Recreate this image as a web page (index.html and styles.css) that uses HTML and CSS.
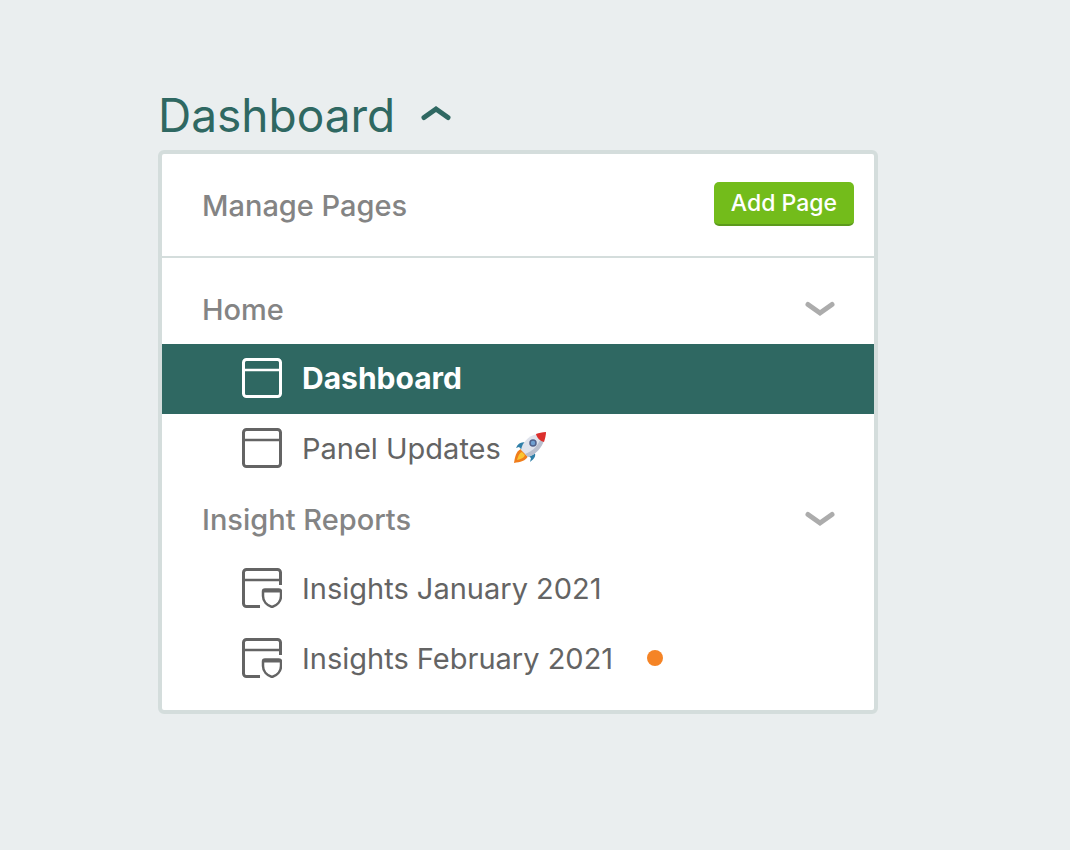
FILE: index.html
```
<!DOCTYPE html>
<html lang="en">
<head>
  <meta charset="UTF-8" />
  <meta name="viewport" content="width=device-width, initial-scale=1" />
  <title>Dashboard</title>
  <link rel="stylesheet" href="styles.css">
</head>
<body>

<main class="page">
  <h1 class="title">
    <button type="button" class="title-toggle" aria-expanded="true" aria-controls="pages-menu">
      Dashboard
      <svg class="chevron" viewBox="0 0 30 18" aria-hidden="true"><path d="M3 11.5 L15 3 L27 11.5" /></svg>
    </button>
  </h1>

  <nav class="menu" id="pages-menu" aria-label="Pages">
    <div class="menu-header">
      <h2 class="menu-title">Manage Pages</h2>
      <button type="button" class="add-button">Add Page</button>
    </div>

    <div class="menu-body">
      <button type="button" class="group" aria-expanded="true">
        Home
        <svg class="chevron" viewBox="0 0 30 18" aria-hidden="true"><path d="M3 4.5 L15 13 L27 4.5" /></svg>
      </button>
      <ul class="page-list">
        <li>
          <a href="#" class="page-link active" aria-current="page">
            <svg class="page-icon" viewBox="0 0 40 40" aria-hidden="true">
              <rect x="1.5" y="1.5" width="37" height="37" rx="3" />
              <path class="thin" d="M2 12 H38" />
            </svg>
            Dashboard
          </a>
        </li>
        <li>
          <a href="#" class="page-link">
            <svg class="page-icon" viewBox="0 0 40 40" aria-hidden="true">
              <rect x="1.5" y="1.5" width="37" height="37" rx="3" />
              <path class="thin" d="M2 12 H38" />
            </svg>
            Panel Updates
            <svg class="rocket" viewBox="0 0 34 34" aria-hidden="true">
              <path fill="#2f7fa8" d="M14 12 C9 10 5 12 3 17 L6 16 L9 19 Z M21 20 C24 25 21 28 17 31 L18 27 L14 24 Z" />
              <path fill="#f07d1a" d="M8 18 C3 20 2 26 1 32 C7 31 13 30 15 25 Z" />
              <path fill="#fbc531" d="M9 21 C6 22 5 26 4 29 C8 28 11 27 12 24 Z" />
              <path fill="#dfe3ec" d="M24 3 C15 5 9 12 8 19 L15 26 C22 24 29 17 31 9 Z" />
              <path fill="#b9bfce" d="M31 9 C29 17 22 24 15 26 L12 23 C20 20 26 14 28 6 Z" />
              <path fill="#dc2f2c" d="M33 1 C29 1 26 2 23 3 C24 7 27 10 31 11 C32 8 33 4 33 1 Z" />
              <circle cx="20" cy="12" r="3" fill="#6f9fd0" stroke="#50628c" stroke-width="1.5" />
            </svg>
          </a>
        </li>
      </ul>

      <button type="button" class="group" aria-expanded="true">
        Insight Reports
        <svg class="chevron" viewBox="0 0 30 18" aria-hidden="true"><path d="M3 4.5 L15 13 L27 4.5" /></svg>
      </button>
      <ul class="page-list">
        <li>
          <a href="#" class="page-link">
            <svg class="page-icon" viewBox="0 0 40 40" aria-hidden="true">
              <path d="M18 38.5 H4.5 A3 3 0 0 1 1.5 35.5 V4.5 A3 3 0 0 1 4.5 1.5 H35.5 A3 3 0 0 1 38.5 4.5 V17" />
              <path class="thin" d="M2 12 H38" />
              <path class="shield" d="M23 21.5 H37 Q39 21.5 39 23.5 V28 C39 33.5 35 37.5 30 39 C25 37.5 21 33.5 21 28 V23.5 Q21 21.5 23 21.5 Z" />
              <path d="M21 23 H39" />
            </svg>
            Insights January 2021
          </a>
        </li>
        <li>
          <a href="#" class="page-link">
            <svg class="page-icon" viewBox="0 0 40 40" aria-hidden="true">
              <path d="M18 38.5 H4.5 A3 3 0 0 1 1.5 35.5 V4.5 A3 3 0 0 1 4.5 1.5 H35.5 A3 3 0 0 1 38.5 4.5 V17" />
              <path class="thin" d="M2 12 H38" />
              <path class="shield" d="M23 21.5 H37 Q39 21.5 39 23.5 V28 C39 33.5 35 37.5 30 39 C25 37.5 21 33.5 21 28 V23.5 Q21 21.5 23 21.5 Z" />
              <path d="M21 23 H39" />
            </svg>
            Insights February 2021
            <span class="dot"></span>
          </a>
        </li>
      </ul>
    </div>
  </nav>
</main>

</body>
</html>
```
FILE: styles.css
```
* {
  box-sizing: border-box;
}
body {
  margin: 0;
  background: #eaeeef;
  color: #646464;
  font-family: Inter, "Liberation Sans", sans-serif;
  font-size: 29px;
}
button {
  border: 0;
  padding: 0;
  background: none;
  color: inherit;
  font: inherit;
  cursor: pointer;
}
.page {
  max-width: 878px;
  padding: 80px 0 80px 158px;
}
.title {
  margin: 0;
  color: #2f6862;
  font-size: 46px;
  font-weight: 400;
  line-height: 70px;
}
.title-toggle {
  display: flex;
  align-items: center;
  gap: 26px;
}
.chevron {
  width: 30px;
  height: 18px;
  fill: none;
  stroke: currentColor;
  stroke-width: 5;
  stroke-linecap: round;
  overflow: visible;
}
.menu {
  background: white;
  border: 4px solid #d4dddc;
  border-radius: 6px;
}
.menu-header {
  display: flex;
  align-items: flex-start;
  justify-content: space-between;
  padding: 28px 20px 26px 40px;
  border-bottom: 2px solid #d4dddc;
}
.menu-title {
  margin: 0;
  color: #848484;
  font-size: 29px;
  font-weight: 500;
  line-height: 48px;
}
.add-button {
  padding: 0 17px;
  background: #73bc1b;
  border-bottom: 2px solid #5c9a1c;
  border-radius: 5px;
  color: white;
  font-size: 23px;
  font-weight: 500;
  line-height: 42px;
}
.menu-body {
  padding: 16px 0;
}
.group {
  display: flex;
  align-items: center;
  justify-content: space-between;
  width: 100%;
  height: 70px;
  padding: 0 39px 0 40px;
  color: #848484;
  font-weight: 500;
}
.group .chevron {
  color: #acacac;
}
.page-list {
  margin: 0;
  padding: 0;
  list-style: none;
}
.page-link {
  display: flex;
  align-items: center;
  height: 70px;
  padding: 0 80px 2px;
  color: #646464;
  text-decoration: none;
}
.page-link.active {
  background: #2f6862;
  color: white;
  font-size: 30px;
  font-weight: 700;
}
.page-icon {
  width: 40px;
  height: 40px;
  margin-right: 20px;
  fill: none;
  stroke: currentColor;
  stroke-width: 3;
}
.page-icon .thin,
.page-icon .shield {
  stroke-width: 2.5;
}
.rocket {
  width: 34px;
  height: 34px;
  margin-left: 12px;
}
.dot {
  width: 16px;
  height: 16px;
  margin-left: 34px;
  background: #f58426;
  border-radius: 50%;
}
```
